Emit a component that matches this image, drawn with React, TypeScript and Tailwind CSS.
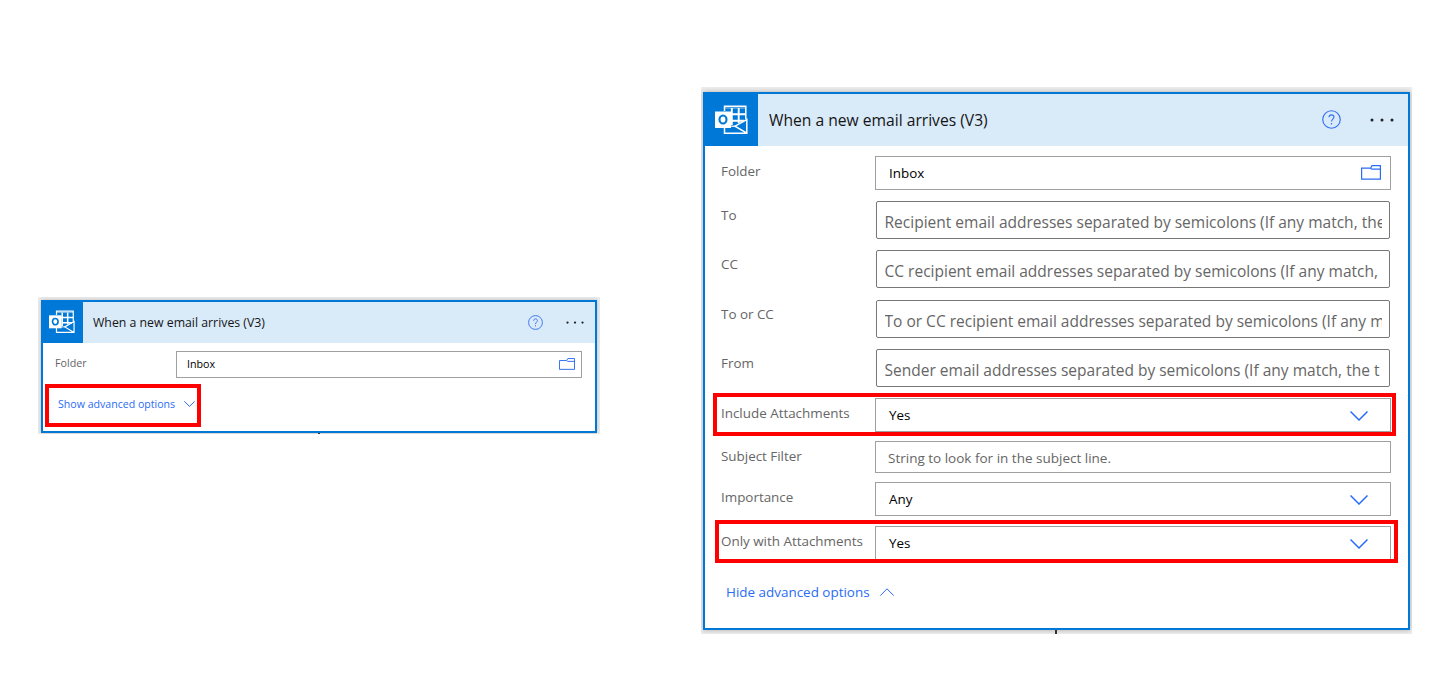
import type { ReactNode } from "react";

function OutlookIcon({ className }: { className: string }) {
  return (
    <svg className={className} viewBox="0 0 33 30" fill="none">
      <path d="M9.500 6V1.300h21.300V14M9.500 22v6.200h22.300V14.500L20 21.200l11.800 7" stroke="#fff" strokeWidth="1.500" />
      <path d="M10 3h20.500" stroke="#fff" strokeWidth="1" opacity=".6" />
      <path d="M10 9.200h20.500M16 15.800h13M16.800 3v17M23.700 3v15" stroke="#fff" strokeWidth="1.900" />
      <path d="M14 21.200h6" stroke="#fff" strokeWidth="1.200" />
      <path d="M0 6.500h16v16.500H0z" fill="#fff" />
      <ellipse cx="8" cy="14.500" rx="3.500" ry="4" stroke="#0078d7" strokeWidth="2.100" />
    </svg>
  );
}

function HelpIcon({ className }: { className: string }) {
  return (
    <svg className={className} viewBox="0 0 18 18" fill="none" stroke="#3670f5" strokeWidth="1.100">
      <circle cx="9" cy="9" r="8.300" />
      <path d="M6.700 6.900C6.700 5.400 7.700 4.600 9 4.600s2.300.8 2.300 2.100c0 1.900-2.300 2-2.300 4.200M9 12.200v1.500" />
    </svg>
  );
}

function FolderIcon({ className }: { className: string }) {
  return (
    <svg className={className} viewBox="0 0 20 15" fill="none" stroke="#2a6cf5" strokeWidth="1.200">
      <path d="M.6 3.200h9l1.400-2.500h8.400v13.500H.6zM9.600 3.200l1.200 1h8.600" />
    </svg>
  );
}

function Chevron({ className, up = false }: { className: string; up?: boolean }) {
  return (
    <svg className={className} viewBox="0 0 18 10" fill="none" stroke="currentColor" preserveAspectRatio="none">
      <path d={up ? "M.5 9.500L9 1l8.500 8.500" : "M.5.5L9 9L17.500.5"} vectorEffect="non-scaling-stroke" />
    </svg>
  );
}

function Dots({ className }: { className: string }) {
  return (
    <svg className={className} viewBox="0 0 24 4" fill="#222">
      <circle cx="2" cy="2" r="1.500" />
      <circle cx="12" cy="2" r="1.500" />
      <circle cx="22" cy="2" r="1.500" />
    </svg>
  );
}

function Row({ label, className, children }: { label: string; className: string; children: ReactNode }) {
  return (
    <div className={`flex items-start ${className}`}>
      <div className="w-[154px] shrink-0 whitespace-nowrap text-[13.450px] leading-5 tracking-[-0.020px] text-[#666]">
        {label}
      </div>
      {children}
    </div>
  );
}

function Picker({ value }: { value: string }) {
  return (
    <div className="flex h-[34px] w-[516px] items-center border border-[#a0a0a0] pr-[22px] pl-[13px] text-[13.400px] text-black">
      <span className="grow leading-5">{value}</span>
      <Chevron className="mt-px h-[10px] w-[18px] stroke-[1.500] text-[#2a6cf5]" />
    </div>
  );
}

function Recipients({ text }: { text: string }) {
  return (
    <div className="ml-px flex h-[38px] w-[514px] items-center rounded-[2px] border border-[#777] pt-[3px] pr-[7px] pl-[7.500px]">
      <span className="w-full overflow-hidden whitespace-nowrap text-[15.530px] leading-6 text-[#666]">{text}</span>
    </div>
  );
}

export default function App() {
  return (
    <main className="flex h-[682px] w-[1436px] items-start overflow-hidden bg-white font-['Open_Sans','Noto_Sans',sans-serif]">
      <section className="relative mt-[297px] ml-[38px] h-[137px] w-[562px] overflow-hidden bg-[#ededed] pt-[3px] pl-[3px]">
        <div className="h-[133px] w-[556px] border-2 border-[#0078d7] bg-white shadow-[0_0_4px_#bbb]">
          <header className="flex h-[41px] items-center bg-[#d9eaf9]">
            <div className="-mt-px flex h-[42px] w-[40px] shrink-0 items-center bg-[#0078d7] pl-[6px]">
              <OutlookIcon className="h-[24px] w-[26px]" />
            </div>
            <h2 className="grow pt-px pl-[10px] text-[12.300px] text-[#151515]">When a new email arrives (V3)</h2>
            <HelpIcon className="mb-px size-[15px]" />
            <Dots className="mr-[10px] ml-[22px] h-[3px] w-[20px]" />
          </header>
          <div className="flex pt-[8px] pl-[12px]">
            <div className="mt-[2px] w-[121px] text-[10.700px] leading-5 text-[#666]">Folder</div>
            <div className="flex h-[27px] w-[406px] items-center border border-[#a0a0a0] pr-[6px] pl-[10px] text-[10.700px] text-black">
              <span className="grow">Inbox</span>
              <FolderIcon className="mb-px h-[12px] w-[16px]" />
            </div>
          </div>
          <div className="mt-[16px] flex items-center pl-[15px] text-[10.600px] leading-5 text-[#2a6cf5]">
            <span>Show advanced options</span>
            <Chevron className="ml-[9px] h-[6px] w-[11px]" />
          </div>
        </div>
        <div className="absolute top-[87px] left-[7px] h-[43px] w-[156px] border-4 border-[#fe0000]" />
        <div className="absolute bottom-0 left-[280px] h-px w-[2px] bg-[#333]" />
      </section>

      <section className="relative mt-[87px] ml-[101px] h-[547px] w-[711px] overflow-hidden bg-[#ededed] pt-[5px] pl-[2px]">
        <div className="h-[538px] w-[707px] border-2 border-r-[2.500px] border-l-[2.500px] border-[#0078d7] bg-white shadow-[0_0_5px_#aaa]">
          <header className="flex h-[52px] items-center bg-[#d9eaf9]">
            <div className="flex h-[52px] w-[53px] shrink-0 items-center bg-[#0078d7] pl-[10px]">
              <OutlookIcon className="h-[30px] w-[33px]" />
            </div>
            <h2 className="grow pt-px pl-[11px] text-[15.650px] text-[#151515]">When a new email arrives (V3)</h2>
            <HelpIcon className="mb-[2px] size-[19px]" />
            <Dots className="mr-[14px] ml-[29px] h-[4px] w-[24px]" />
          </header>
          <div className="flex flex-col pt-[10px] pl-[16px]">
            <Row label="Folder" className="h-[45px] *:first:mt-[5px]">
              <div className="flex h-[34px] w-[516px] items-center border border-[#a0a0a0] pr-[9px] pl-[13px] text-[13.400px] text-black">
                <span className="grow leading-5">Inbox</span>
                <FolderIcon className="mb-px h-[15px] w-[20px]" />
              </div>
            </Row>
            <Row label="To" className="h-[49px] *:first:mt-[4px]">
              <Recipients text="Recipient email addresses separated by semicolons (If any match, the" />
            </Row>
            <Row label="CC" className="h-[50px] *:first:mt-[4px]">
              <Recipients text="CC recipient email addresses separated by semicolons (If any match," />
            </Row>
            <Row label="To or CC" className="h-[49px] *:first:mt-[4px]">
              <Recipients text="To or CC recipient email addresses separated by semicolons (If any m" />
            </Row>
            <Row label="From" className="h-[49px] *:first:mt-[4px]">
              <Recipients text="Sender email addresses separated by semicolons (If any match, the t" />
            </Row>
            <Row label="Include Attachments" className="h-[43px] *:first:mt-[5px]">
              <Picker value="Yes" />
            </Row>
            <Row label="Subject Filter" className="h-[41px] *:first:mt-[5px]">
              <div className="flex h-[32px] w-[516px] items-center border border-[#a0a0a0] pt-[2px] pl-[12px] text-[13.500px] text-[#666]">
                String to look for in the subject line.
              </div>
            </Row>
            <Row label="Importance" className="h-[44px] *:first:mt-[5px]">
              <Picker value="Any" />
            </Row>
            <Row label="Only with Attachments" className="h-[57px] *:first:mt-[5px]">
              <Picker value="Yes" />
            </Row>
            <div className="-mt-px flex items-center pl-[5px] text-[13.450px] leading-5 text-[#2a6cf5]">
              <span>Hide advanced options</span>
              <Chevron up className="ml-[10px] h-[8px] w-[14px]" />
            </div>
          </div>
        </div>
        <div className="absolute top-[306px] left-[12px] h-[43px] w-[683px] border-4 border-[#fe0000]" />
        <div className="absolute top-[433px] left-[14px] h-[43px] w-[683px] border-4 border-[#fe0000]" />
        <div className="absolute bottom-0 left-[354px] h-[4px] w-[2px] bg-[#333]" />
      </section>
    </main>
  );
}
